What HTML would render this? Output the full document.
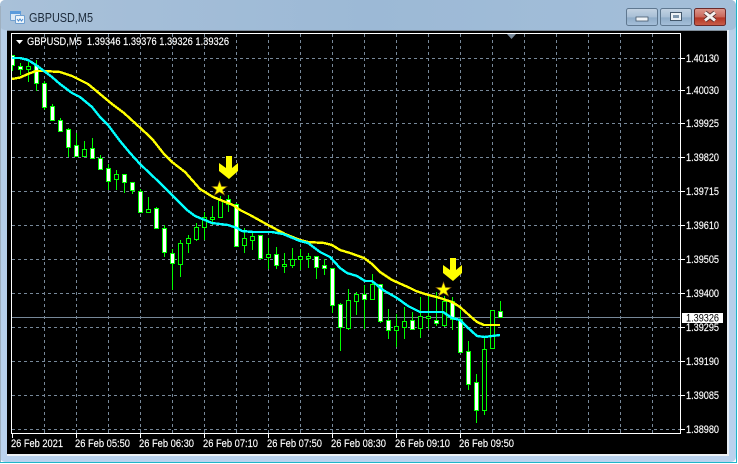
<!DOCTYPE html>
<html><head><meta charset="utf-8"><style>
html,body{margin:0;padding:0;background:#fff}
body{width:738px;height:464px;overflow:hidden;position:relative}
svg{display:block;position:absolute;left:0;top:0}
.t{font-family:"Liberation Sans",sans-serif;font-size:11px;fill:#fff;stroke:#fff;stroke-width:.15}
</style></head><body>
<svg width="738" height="464" viewBox="0 0 738 464" xmlns="http://www.w3.org/2000/svg">
<defs>
<linearGradient id="fr" x1="0" y1="0" x2="0" y2="1"><stop offset="0" stop-color="#a7bfd8"/><stop offset=".07" stop-color="#b7cfe8"/><stop offset=".45" stop-color="#b4cde8"/><stop offset="1" stop-color="#bad2ee"/></linearGradient>
<linearGradient id="top" x1="0" y1="0" x2="1" y2="0"><stop offset="0" stop-color="#a9c1d9"/><stop offset=".5" stop-color="#9cb9d6"/><stop offset="1" stop-color="#a4bfd9"/></linearGradient>
<linearGradient id="btn" x1="0" y1="0" x2="0" y2="1"><stop offset="0" stop-color="#c3d3e3"/><stop offset=".5" stop-color="#a8bfd6"/><stop offset=".55" stop-color="#8facc8"/><stop offset="1" stop-color="#a6c0da"/></linearGradient>
<linearGradient id="cls" x1="0" y1="0" x2="0" y2="1"><stop offset="0" stop-color="#dd9a8e"/><stop offset=".5" stop-color="#c9675a"/><stop offset=".55" stop-color="#b43524"/><stop offset="1" stop-color="#c9604c"/></linearGradient>
<clipPath id="ch"><rect x="12" y="34" width="668" height="399"/></clipPath>
</defs>
<rect width="738" height="464" fill="#fff"/>
<rect x="0" y="0" width="736" height="462" rx="5" fill="url(#fr)"/>
<rect x="0" y="0" width="736" height="30" rx="5" fill="url(#top)"/>
<path d="M0 462.500H737" stroke="#1fb5c9" stroke-width="1"/>
<path d="M736.500 0V463" stroke="#1fb5c9" stroke-width="1"/>
<path d="M.5 6V462" stroke="#9fb0c0" stroke-width="1"/>
<rect x="727" y="30" width="2" height="426" fill="#e8eef5"/>
<rect x="7" y="454" width="722" height="2" fill="#eef2f6"/>
<rect x="7" y="30" width="720" height="1" fill="#7f8c99"/>
<rect x="7" y="31" width="720" height="423" fill="#000"/>

<!-- title icon -->
<rect x="10.500" y="11.500" width="10" height="9" rx="1" fill="#dce9f6" stroke="#6f9fd0"/>
<rect x="10" y="11" width="11" height="3" fill="#5b9bdc"/>
<rect x="15.500" y="15.500" width="9" height="8" rx="1" fill="#eef5fb" stroke="#6f9fd0"/>
<path d="M17 19l1.500 2 1.500-2 1.500 2 1.500-2" fill="none" stroke="#4a8ad0" stroke-width="1"/>
<text x="29" y="22" font-family="'Liberation Sans',sans-serif" font-size="13" fill="#1c2a3a" textLength="64" lengthAdjust="spacingAndGlyphs">GBPUSD,M5</text>

<!-- buttons -->
<rect x="626.500" y="8.500" width="31" height="17" rx="2" fill="url(#btn)" stroke="#5f7890"/>
<rect x="636" y="17" width="12" height="4" fill="#f0f4f8" stroke="#44586c" stroke-width=".8"/>
<rect x="660.500" y="8.500" width="31" height="17" rx="2" fill="url(#btn)" stroke="#5f7890"/>
<rect x="670.500" y="12.500" width="11" height="8" fill="#eef2f6" stroke="#44586c"/>
<rect x="673" y="15" width="6" height="3" fill="#7f97ae"/>
<rect x="694.500" y="8.500" width="31" height="17" rx="2" fill="url(#cls)" stroke="#6b2a2a"/>
<path d="M705 12.500l10 8m0-8l-10 8" stroke="#4c2a2a" stroke-width="4.500"/>
<path d="M705 12.500l10 8m0-8l-10 8" stroke="#f4f2f0" stroke-width="3"/>

<!-- grid -->
<g stroke="#778899" stroke-width="1" stroke-dasharray="3 3" fill="none" shape-rendering="crispEdges">
<path d="M12 58.500H680M12 90.500H680M12 123.500H680M12 157.500H680M12 191.500H680M12 225.500H680M12 259.500H680M12 293.500H680M12 327.500H680M12 361.500H680M12 395.500H680M12 429.500H680"/>
<path d="M44.500 34V433M76.500 34V433M108.500 34V433M140.500 34V433M172.500 34V433M204.500 34V433M236.500 34V433M268.500 34V433M300.500 34V433M332.500 34V433M364.500 34V433M396.500 34V433M428.500 34V433M460.500 34V433M492.500 34V433M524.500 34V433M556.500 34V433M588.500 34V433M620.500 34V433M652.500 34V433"/>
</g>
<path d="M12 317.500H680" stroke="#778899" stroke-width="1" shape-rendering="crispEdges"/>

<g clip-path="url(#ch)" shape-rendering="crispEdges">
<path fill="none" stroke="#00ff00" d="M12.500 55V71M20.500 63V75M28.500 62V82M36.500 60V91M44.500 81V110M52.500 104V121M60.500 118V132M68.500 128V157M76.500 133V157M84.500 141V157M92.500 138V159M100.500 155V170M108.500 164V190M116.500 170V190M124.500 174V193M132.500 182V194M140.500 189V212M148.500 197V212M156.500 207V229M164.500 225V257M172.500 249V290M180.500 240V277M188.500 235V253M196.500 223V241M204.500 212V240M212.500 206V225M220.500 196V218M228.500 195V212M236.500 203V246M244.500 228V253M252.500 232V250M260.500 235V258M268.500 238V269M276.500 247V269M284.500 253V273M292.500 248V268M300.500 249V270M308.500 253V268M316.500 256V279M324.500 259V275M332.500 268V313M340.500 303V351M348.500 289V330M356.500 292V315M364.500 285V329M372.500 274V299M380.500 284V323M388.500 309V339M396.500 314V347M404.500 307V339M412.500 312V329M420.500 297V338M428.500 295V329M436.500 292V326M444.500 296V327M452.500 297V330M460.500 310V352M468.500 341V390M476.500 374V423M484.500 337V415M492.500 310V349M500.500 301V317"/>
<path fill="#000" stroke="#00ff00" d="M26.500 66.500h4v3h-4zM82.500 149.500h4v7h-4zM114.500 174.500h4v5h-4zM146.500 209.500h4v3h-4zM178.500 243.500h4v21h-4zM186.500 238.500h4v5h-4zM194.500 227.500h4v12h-4zM202.500 217.500h4v10h-4zM210.500 217.500h4v2h-4zM218.500 200.500h4v17h-4zM242.500 238.500h4v7h-4zM250.500 236.500h4v4h-4zM266.500 254.500h4v3h-4zM282.500 264.500h4v2h-4zM290.500 259.500h4v6h-4zM298.500 256.500h4v3h-4zM306.500 256.500h4v2h-4zM346.500 300.500h4v28h-4zM354.500 294.500h4v7h-4zM370.500 284.500h4v15h-4zM394.500 326.500h4v4h-4zM402.500 321.500h4v6h-4zM418.500 316.500h4v12h-4zM426.500 316.500h4v2h-4zM442.500 301.500h4v24h-4zM482.500 349.500h4v61h-4zM490.500 310.500h4v38h-4z"/>
<path fill="#fff" stroke="#00ff00" d="M10.500 55.500h4v10h-4zM18.500 66.500h4v3h-4zM34.500 65.500h4v18h-4zM42.500 83.500h4v24h-4zM50.500 106.500h4v14h-4zM58.500 120.500h4v11h-4zM66.500 129.500h4v18h-4zM74.500 145.500h4v11h-4zM90.500 148.500h4v10h-4zM98.500 158.500h4v11h-4zM106.500 168.500h4v13h-4zM122.500 174.500h4v8h-4zM130.500 182.500h4v8h-4zM138.500 191.500h4v21h-4zM154.500 208.500h4v20h-4zM162.500 228.500h4v24h-4zM170.500 253.500h4v10h-4zM226.500 199.500h4v5h-4zM234.500 204.500h4v42h-4zM258.500 235.500h4v23h-4zM274.500 254.500h4v11h-4zM314.500 256.500h4v11h-4zM322.500 265.500h4v3h-4zM330.500 268.500h4v37h-4zM338.500 304.500h4v23h-4zM362.500 294.500h4v5h-4zM378.500 284.500h4v37h-4zM386.500 320.500h4v10h-4zM410.500 320.500h4v9h-4zM434.500 320.500h4v3h-4zM450.500 301.500h4v18h-4zM458.500 319.500h4v33h-4zM466.500 351.500h4v33h-4zM474.500 382.500h4v28h-4zM498.500 311.500h4v6h-4z"/>
</g>
<g clip-path="url(#ch)" fill="none" stroke-width="2.400" stroke-linejoin="round" shape-rendering="crispEdges">
<polyline stroke="#ffff00" points="12,79 20,77.500 28,74 36,71 44,71 60,72 72,76 88,84 100,94 112,104 124,113 136,124 148,135 153,140 164,154 172,162 185,172 200,189 213,197 233,205 240,210 250,215 268,225 285,234 300,240 308,242 324,243 332,245 340,250 350,253 364,258 372,264 380,272 392,280 410,288 416,291 425,294 440,298 452,302 460,307 470,316 477,322 484,325 500,325"/>
<polyline stroke="#00ffff" points="12,58 20,58 28,60 36,65 44,71 52,77 60,84 72,93 80,97 92,107 100,117 108,125 120,141 130,153 140,164 160,183 170,193 187,210 195,216 212,223 220,224 228,225 237,228 242,231 253,232 272,232 283,234 300,241 308,243 320,252 330,257 340,268 347,273 357,276 365,281 372,281 383,290 397,298 408,306 420,312 443,312 452,318 460,320 467,327 477,336 485,337 492,336 500,335"/>
</g>

<!-- stars -->
<polygon points="219.500,181 221.500,186.500 227,186.500 222.500,190 224.500,195 219.500,192 214.500,195 216.500,190 212,186.500 217.500,186.500" fill="#ffff00" stroke="#8a5a10" stroke-width=".6"/>
<polygon points="443.500,282 445.500,287.500 451,287.500 446.500,291 448.500,296 443.500,293 438.500,296 440.500,291 436,287.500 441.500,287.500" fill="#ffff00" stroke="#8a5a10" stroke-width=".6"/>
<!-- arrows -->
<polygon points="226,156 232,156 232,168 238,163 238,171 229,179 219,171 219,163 226,168" fill="#ffff00"/>
<polygon points="450,258 456,258 456,270 462,265 462,273 453,281 443,273 443,265 450,270" fill="#ffff00"/>

<!-- chart border -->
<path d="M11.500 33.500H680.500V433.500H11.500Z" fill="none" stroke="#fff" stroke-width="1" shape-rendering="crispEdges"/>
<path d="M507 34H516L511.500 39Z" fill="#778899"/>
<path d="M16 40H23L19.500 44Z" fill="#fff"/>
<text class="t" x="27" y="45" textLength="202" lengthAdjust="spacingAndGlyphs" xml:space="preserve">GBPUSD,M5  1.39346 1.39376 1.39326 1.39326</text>

<!-- right ticks + labels -->
<path stroke="#fff" shape-rendering="crispEdges" d="M681 58.500h4M681 90.500h4M681 123.500h4M681 157.500h4M681 191.500h4M681 225.500h4M681 259.500h4M681 293.500h4M681 327.500h4M681 361.500h4M681 395.500h4M681 429.500h4"/>
<text class="t" x="686" y="62" textLength="33" lengthAdjust="spacingAndGlyphs">1.40130</text>
<text class="t" x="686" y="94" textLength="33" lengthAdjust="spacingAndGlyphs">1.40030</text>
<text class="t" x="686" y="127" textLength="33" lengthAdjust="spacingAndGlyphs">1.39925</text>
<text class="t" x="686" y="161" textLength="33" lengthAdjust="spacingAndGlyphs">1.39820</text>
<text class="t" x="686" y="195" textLength="33" lengthAdjust="spacingAndGlyphs">1.39715</text>
<text class="t" x="686" y="229" textLength="33" lengthAdjust="spacingAndGlyphs">1.39610</text>
<text class="t" x="686" y="263" textLength="33" lengthAdjust="spacingAndGlyphs">1.39505</text>
<text class="t" x="686" y="297" textLength="33" lengthAdjust="spacingAndGlyphs">1.39400</text>
<text class="t" x="686" y="331" textLength="33" lengthAdjust="spacingAndGlyphs">1.39295</text>
<text class="t" x="686" y="365" textLength="33" lengthAdjust="spacingAndGlyphs">1.39190</text>
<text class="t" x="686" y="399" textLength="33" lengthAdjust="spacingAndGlyphs">1.39085</text>
<text class="t" x="686" y="433" textLength="33" lengthAdjust="spacingAndGlyphs">1.38980</text>
<rect x="682" y="313" width="41" height="10" fill="#fff"/>
<text x="686" y="321.500" font-family="'Liberation Sans',sans-serif" font-size="11" fill="#000" textLength="33" lengthAdjust="spacingAndGlyphs">1.39326</text>

<!-- bottom ticks + labels -->
<path stroke="#fff" shape-rendering="crispEdges" d="M12.500 434v4M76.500 434v4M140.500 434v4M204.500 434v4M268.500 434v4M332.500 434v4M396.500 434v4M460.500 434v4"/>
<text class="t" x="11" y="447" textLength="52" lengthAdjust="spacingAndGlyphs">26 Feb 2021</text>
<text class="t" x="75" y="447" textLength="55" lengthAdjust="spacingAndGlyphs">26 Feb 05:50</text>
<text class="t" x="139" y="447" textLength="55" lengthAdjust="spacingAndGlyphs">26 Feb 06:30</text>
<text class="t" x="203" y="447" textLength="55" lengthAdjust="spacingAndGlyphs">26 Feb 07:10</text>
<text class="t" x="267" y="447" textLength="55" lengthAdjust="spacingAndGlyphs">26 Feb 07:50</text>
<text class="t" x="331" y="447" textLength="55" lengthAdjust="spacingAndGlyphs">26 Feb 08:30</text>
<text class="t" x="395" y="447" textLength="55" lengthAdjust="spacingAndGlyphs">26 Feb 09:10</text>
<text class="t" x="459" y="447" textLength="55" lengthAdjust="spacingAndGlyphs">26 Feb 09:50</text>
</svg>
</body></html>
